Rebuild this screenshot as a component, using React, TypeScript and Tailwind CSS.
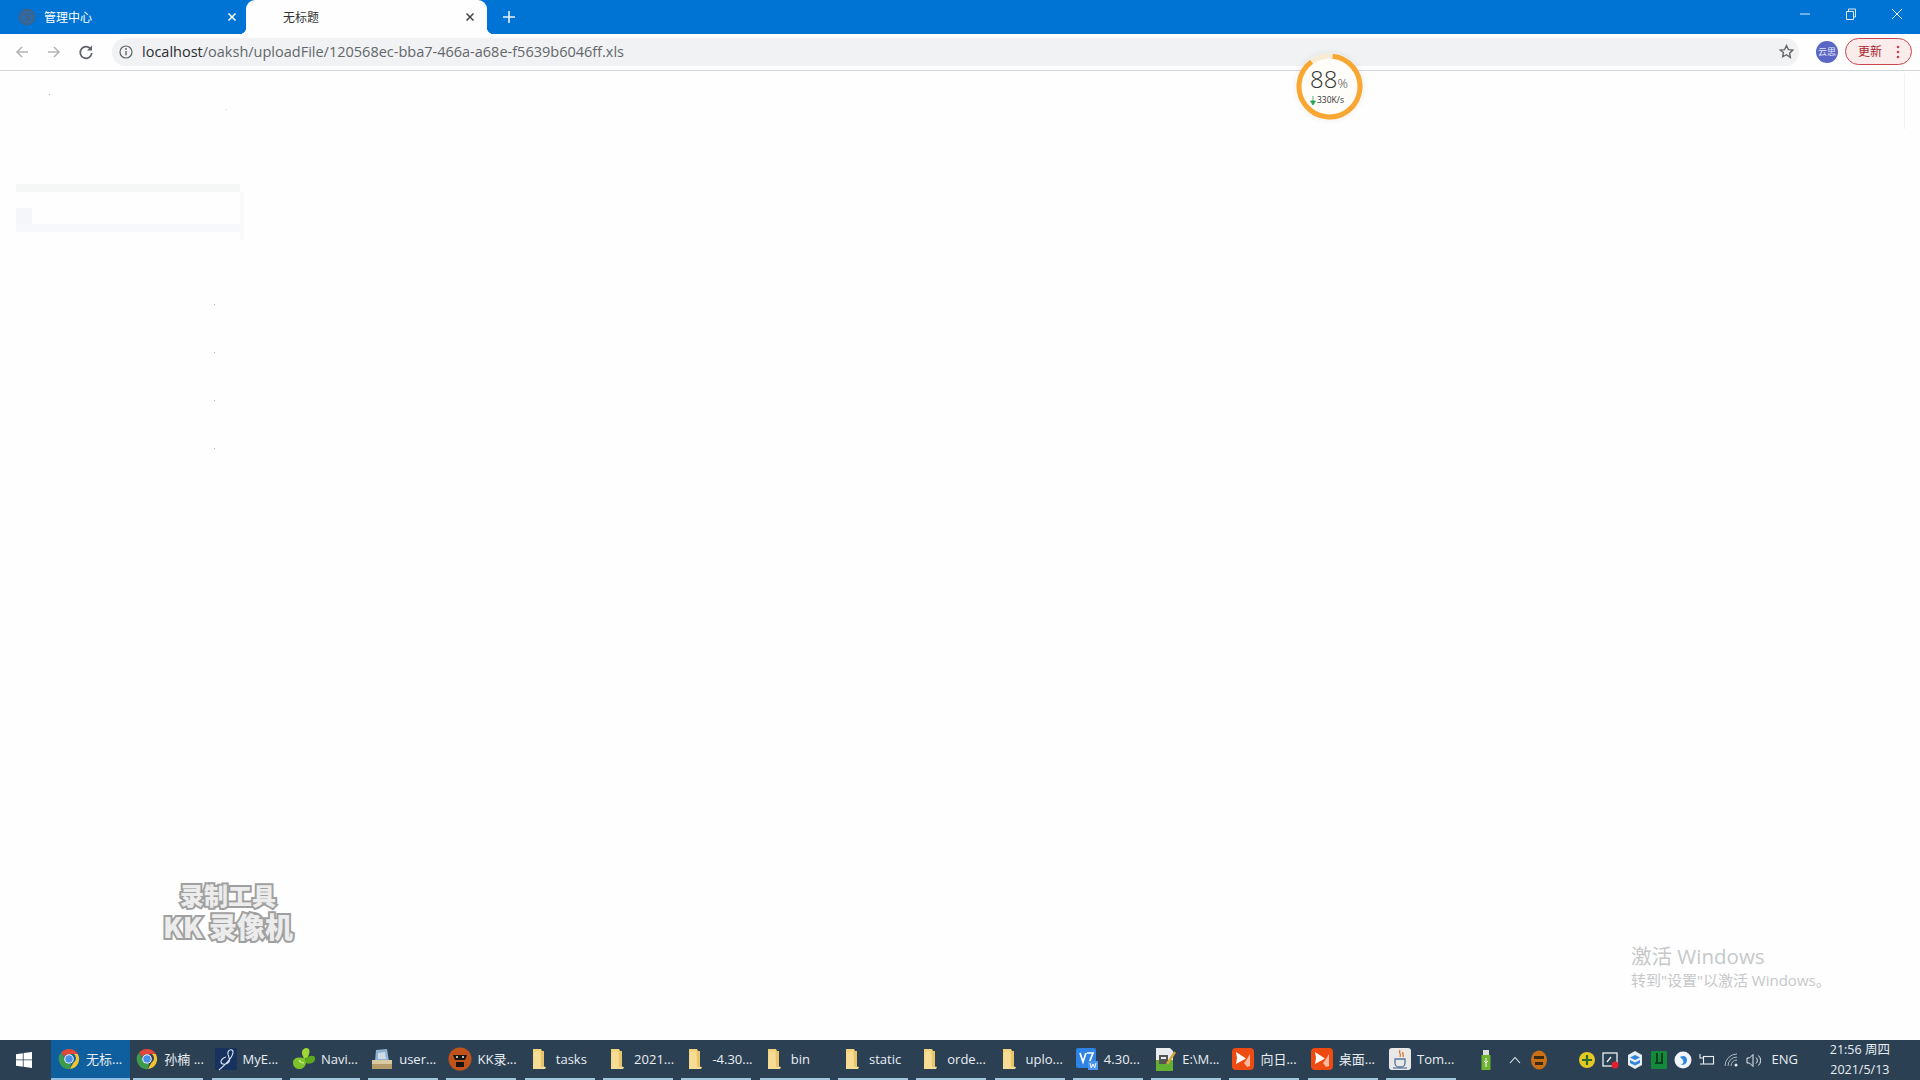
import React from "react";

const sans = "[font-family:'Open_Sans','Noto_Sans_CJK_SC',sans-serif]";

function Chrome() {
  return (
    <svg width="22" height="22" viewBox="0 0 24 24">
      <path d="M12 1a11 11 0 0 1 9.6 5.5H12a5.5 5.5 0 0 0-5.2 3.7L3.4 5A11 11 0 0 1 12 1z" fill="#e0483a" />
      <path d="M21.6 6.5A11 11 0 0 1 12.8 23l4-7a5.5 5.5 0 0 0 .1-9.5z" fill="#f4c430" />
      <path d="M12.8 23A11 11 0 0 1 3.4 5l4.3 7.6a5.5 5.5 0 0 0 6.7 4.7z" fill="#3c9a4c" />
      <circle cx="12" cy="12" r="5.2" fill="#fff" />
      <circle cx="12" cy="12" r="4.1" fill="#4a8fe8" />
    </svg>
  );
}

function Folder() {
  return (
    <svg width="18" height="22" viewBox="0 0 18 22">
      <path d="M3 1h8l1 2v16l-9 2z" fill="#f3d27a" />
      <path d="M3 21l1-17 6-1 1 15 5 1-1 2z" fill="#f6dc95" />
      <rect x="11" y="3" width="3" height="16" fill="#e9c468" />
    </svg>
  );
}

function MyE() {
  return (
    <svg width="24" height="24" viewBox="0 0 24 24">
      <rect x="1" y="1" width="22" height="22" fill="#18325f" />
      <path d="M5 23c7-6 14-14 14-18 0-3-4-3-5 0-1 4 3 6 1 10-2 3-8 3-8 0 0-2 2-4 5-5" fill="none" stroke="#dbe6f5" strokeWidth="1.1" />
    </svg>
  );
}

function Navi() {
  return (
    <svg width="24" height="24" viewBox="0 0 24 24">
      <path d="M13 11C7 10 1 10 1 16c0 6 8 8 11 4 3-3 2-6 1-9z" fill="#7cc22a" />
      <path d="M12 11C9 7 9 2 14 1c5 0 4 6 1 10z" fill="#9ed836" />
      <path d="M13 12c4-4 10-4 10-1 1 4-5 7-9 5z" fill="#5da81e" />
      <path d="M7 13c1 2 3 3 5 3" stroke="#d4f08a" strokeWidth="1.2" fill="none" />
    </svg>
  );
}

function User() {
  return (
    <svg width="24" height="24" viewBox="0 0 24 24">
      <path d="M6 3l11-1 2 12H5z" fill="#8fb2d0" />
      <path d="M8 6l7-1 1 7H8z" fill="#cfdbe6" />
      <rect x="2" y="13" width="20" height="4" fill="#d9c9a0" />
      <rect x="2" y="17" width="20" height="5" fill="#b59b6a" />
    </svg>
  );
}

function KK() {
  return (
    <svg width="24" height="24" viewBox="0 0 24 24">
      <circle cx="12" cy="12" r="11.500" fill="#c2531a" />
      <path d="M5 8h14l-2 5H7z" fill="#1b1512" />
      <rect x="8" y="15" width="8" height="5" fill="#1b1512" />
      <circle cx="9" cy="10" r="1" fill="#eee" />
      <circle cx="15" cy="10" r="1" fill="#eee" />
    </svg>
  );
}

function Vs() {
  return (
    <svg width="24" height="24" viewBox="0 0 24 24">
      <rect x="1" y="1" width="20" height="20" rx="2" fill="#2f82e6" />
      <path d="M5 6l3 9 3-9M12 6h6l-4 10" fill="none" stroke="#fff" strokeWidth="1.7" />
      <rect x="13" y="14" width="10" height="9" fill="#4a93ee" />
      <path d="M15 16l1.3 5 1.7-4 1.7 4 1.3-5" fill="none" stroke="#fff" strokeWidth="1" />
    </svg>
  );
}

function Note() {
  return (
    <svg width="24" height="24" viewBox="0 0 24 24">
      <path d="M3 1h14l3 3v20H3z" fill="#e8ecef" />
      <rect x="3" y="13" width="17" height="11" fill="#63b132" />
      <rect x="6" y="8" width="9" height="9" fill="#555" />
      <rect x="8" y="10" width="5" height="2" fill="#eee" />
      <path d="M14 17L22 5" stroke="#d7a63a" strokeWidth="2.4" />
    </svg>
  );
}

function Sun() {
  return (
    <svg width="24" height="24" viewBox="0 0 24 24">
      <rect x="1" y="1" width="22" height="22" rx="4" fill="#ee4b12" />
      <path d="M5 5l10 6.500L5 17l1-6z" fill="#fff" />
      <path d="M16 12l3-5v12l-3 1-3-4z" fill="#ffb89b" />
    </svg>
  );
}

function Tomcat() {
  return (
    <svg width="24" height="24" viewBox="0 0 24 24">
      <rect x="1" y="1" width="22" height="22" rx="3" fill="#e8e8e6" />
      <path d="M12 3c-2 3 2 4 0 7M15 5c-1 2 1 3 0 5" stroke="#d9742a" strokeWidth="1.3" fill="none" />
      <path d="M7 12h10v4a4 4 0 0 1-4 4h-2a4 4 0 0 1-4-4z" fill="none" stroke="#54759a" strokeWidth="1.3" />
      <path d="M5 21h14" stroke="#54759a" strokeWidth="1.2" />
    </svg>
  );
}

const apps: { icon: React.ReactNode; label: string; active?: boolean }[] = [
  { icon: <Chrome />, label: "无标...", active: true },
  { icon: <Chrome />, label: "孙楠 ..." },
  { icon: <MyE />, label: "MyE..." },
  { icon: <Navi />, label: "Navi..." },
  { icon: <User />, label: "user..." },
  { icon: <KK />, label: "KK录..." },
  { icon: <Folder />, label: "tasks" },
  { icon: <Folder />, label: "2021..." },
  { icon: <Folder />, label: "-4.30..." },
  { icon: <Folder />, label: "bin" },
  { icon: <Folder />, label: "static" },
  { icon: <Folder />, label: "orde..." },
  { icon: <Folder />, label: "uplo..." },
  { icon: <Vs />, label: "4.30..." },
  { icon: <Note />, label: "E:\\M..." },
  { icon: <Sun />, label: "向日..." },
  { icon: <Sun />, label: "桌面..." },
  { icon: <Tomcat />, label: "Tom..." },
];

function AppItem({ icon, label, active }: { icon: React.ReactNode; label: string; active?: boolean }) {
  return (
    <div
      className={
        active
          ? "ml-[-4px] mr-[3.3px] flex h-full w-[79px] shrink-0 items-center border-b-2 border-[#8fc0e4] bg-[#0f5f9e] pl-[6px]"
          : "mr-[8.3px] flex h-full w-[70px] shrink-0 items-center border-b-2 border-[#a3c8de] pl-[2px]"
      }
    >
      <span className="flex w-[24px] shrink-0 justify-center">{icon}</span>
      <span className="ml-[5px] whitespace-nowrap pt-[2px] text-[13px] text-[#e8eef2]">{label}</span>
    </div>
  );
}

function Tray({ children, className = "" }: { children: React.ReactNode; className?: string }) {
  return <div className={`flex h-full w-[24px] shrink-0 items-center justify-center ${className}`}>{children}</div>;
}

function Ghost() {
  return (
    <div className="flex flex-col pl-[16px] pt-[113px]">
      <div className="h-[8px] w-[224px] bg-[#f5f7f6]" />
      <div className="flex">
        <div className="flex w-[224px] flex-col">
          <div className="h-[16px]" />
          <div className="h-[16px] w-[16px] bg-[#f4f6fa]" />
          <div className="h-[8px] w-full bg-[#f7f8fb]" />
        </div>
        <div className="h-[48px] w-[4px] bg-[#f8f9f9]" />
      </div>
      <div className="mt-[64px] flex flex-col items-start gap-[47px] pl-[198px]">
        <div className="h-px w-px bg-[#b5b5b5]" />
        <div className="h-px w-px bg-[#b5b5b5]" />
        <div className="h-px w-px bg-[#b5b5b5]" />
        <div className="h-px w-px bg-[#b5b5b5]" />
      </div>
    </div>
  );
}

export default function App() {
  return (
    <div className={`flex h-[1080px] w-[1920px] flex-col overflow-hidden bg-[#fdfefd] ${sans}`}>
      {/* title bar */}
      <div className="flex h-[34px] shrink-0 items-stretch bg-[#0074d4]">
        <div className="flex w-[246px] items-center pl-[18px] pr-[8px] text-white">
          <svg width="18" height="18" viewBox="0 0 18 18">
            <circle cx="9" cy="9" r="7.5" fill="#2d6aa8" stroke="#4a5f78" strokeWidth="1.5" />
            <path d="M11.500 6c-2-1.500-5-.5-4 1.200s4 1.200 4 3-3 2-4.500.8" fill="none" stroke="#4a5f78" strokeWidth="1.200" />
          </svg>
          <span className="ml-[8px] pt-[1px] text-[12px]">管理中心</span>
          <svg className="ml-auto" width="12" height="12" viewBox="0 0 12 12">
            <path d="M2.500 2.500l7 7M9.500 2.500l-7 7" stroke="#fff" strokeWidth="1.500" />
          </svg>
        </div>
        <div className="relative flex w-[241px] items-center rounded-t-[9px] bg-[#fdfefd] pl-[37px] pr-[11px] text-[#333]">
          <div className="absolute bottom-0 left-[-7px] h-[7px] w-[7px] bg-[radial-gradient(circle_at_0_0,transparent_7px,#fdfefd_7.500px)]" />
          <div className="absolute bottom-0 right-[-7px] h-[7px] w-[7px] bg-[radial-gradient(circle_at_100%_0,transparent_7px,#fdfefd_7.500px)]" />
          <span className="pt-[1px] text-[12px]">无标题</span>
          <svg className="ml-auto" width="12" height="12" viewBox="0 0 12 12">
            <path d="M2.500 2.500l7 7M9.500 2.500l-7 7" stroke="#444" strokeWidth="1.500" />
          </svg>
        </div>
        <div className="flex w-[44px] items-center justify-center">
          <svg width="14" height="14" viewBox="0 0 14 14">
            <path d="M7 1v12M1 7h12" stroke="#e6f2fc" strokeWidth="1.600" />
          </svg>
        </div>
        <div className="ml-auto flex items-start">
          <div className="flex h-[28px] w-[46px] items-center justify-center">
            <svg width="12" height="12" viewBox="0 0 12 12"><path d="M1 6h10" stroke="#dcebf8" strokeWidth="1" /></svg>
          </div>
          <div className="flex h-[28px] w-[46px] items-center justify-center">
            <svg width="12" height="12" viewBox="0 0 12 12">
              <path d="M1.500 3.500h7v8h-7zM3.500 3.500v-2.500h7v8h-2" fill="none" stroke="#dcebf8" strokeWidth="1" />
            </svg>
          </div>
          <div className="flex h-[28px] w-[46px] items-center justify-center">
            <svg width="12" height="12" viewBox="0 0 12 12"><path d="M1 1l10 10M11 1L1 11" stroke="#e8f2fb" strokeWidth="1" /></svg>
          </div>
        </div>
      </div>

      {/* toolbar */}
      <div className="flex h-[37px] shrink-0 items-center border-b border-[#d3d6da] bg-[#fdfefd] pb-[1px]">
        <div className="flex w-[112px] shrink-0 items-center pl-[15px]">
          <svg width="14" height="14" viewBox="0 0 14 14">
            <path d="M13 7H2M7 2L2 7l5 5" fill="none" stroke="#b3b5b8" strokeWidth="1.600" />
          </svg>
          <svg className="ml-[18px]" width="14" height="14" viewBox="0 0 14 14">
            <path d="M1 7h11M7 2l5 5-5 5" fill="none" stroke="#b3b5b8" strokeWidth="1.600" />
          </svg>
          <svg className="ml-[17px]" width="16" height="16" viewBox="0 0 16 16">
            <path d="M13 5.500A5.800 5.800 0 1 0 13.800 9" fill="none" stroke="#60636a" strokeWidth="1.700" />
            <path d="M14 1.500v5h-5z" fill="#60636a" />
          </svg>
        </div>
        <div className="flex h-[28px] w-[1687px] shrink-0 items-center rounded-full bg-[#f1f2f3] pl-[7px] pr-[5px]">
          <svg width="14" height="14" viewBox="0 0 14 14">
            <circle cx="7" cy="7" r="6" fill="none" stroke="#5f6368" strokeWidth="1.200" />
            <path d="M7 6v4.200" stroke="#5f6368" strokeWidth="1.400" />
            <circle cx="7" cy="4" r=".9" fill="#5f6368" />
          </svg>
          <span className="ml-[9px] whitespace-nowrap text-[14.500px] text-[#63676c]">
            <span className="text-[#2c2e31]">localhost</span>/oaksh/uploadFile/120568ec-bba7-466a-a68e-f5639b6046ff.xls
          </span>
          <svg className="ml-auto" width="15" height="15" viewBox="0 0 24 24">
            <path d="M12 2.500l3 6.400 7 .9-5.100 4.800 1.300 6.900L12 17.200l-6.200 3.300 1.300-6.900L2 9.800l7-.9z" fill="none" stroke="#666" strokeWidth="2.200" />
          </svg>
        </div>
        <div className="ml-[17px] flex h-[22px] w-[22px] shrink-0 items-center justify-center rounded-full bg-[#5a67c4] text-[9px] text-[#e6e8f7]">云思</div>
        <div className="ml-[7px] flex h-[27px] w-[67px] shrink-0 items-center rounded-full border border-[#c8454d] bg-[#fbecec] pl-[12px] text-[12px] text-[#a8242c]">
          更新
          <svg className="ml-[14px]" width="4" height="14" viewBox="0 0 4 14">
            <circle cx="2" cy="2" r="1.300" fill="#c9434d" />
            <circle cx="2" cy="7" r="1.300" fill="#c9434d" />
            <circle cx="2" cy="12" r="1.300" fill="#c9434d" />
          </svg>
        </div>
      </div>

      {/* page */}
      <div className="relative min-h-0 flex-1">
        <Ghost />
        <div className="absolute left-[49px] top-[23px] h-px w-px bg-[#b5b5b5]" />
        <div className="absolute left-[226px] top-[38px] h-px w-px bg-[#d0d0d0]" />
        <div className="absolute right-[15px] top-[2px] h-[56px] w-px bg-[#f2f4f4]" />

        {/* speed ball */}
        <div className="absolute left-[1296px] top-[-18px] h-[67px] w-[67px] rounded-full shadow-[0_0_6px_rgba(0,0,0,0.08)]">
          <svg className="absolute inset-0" width="67" height="67" viewBox="0 0 67 67">
            <circle cx="33.500" cy="33.500" r="30.500" fill="#fffdf9" stroke="#f8ebd3" strokeWidth="5" />
            <circle
              cx="33.500"
              cy="33.500"
              r="30.500"
              fill="none"
              stroke="#f8a732"
              strokeWidth="5"
              strokeDasharray="169 192"
              transform="rotate(-84 33.500 33.500)"
            />
          </svg>
          <div className="absolute left-[14px] top-[11px] flex items-baseline font-light text-[#333]">
            <span className="text-[24px] leading-[30px]">88</span>
            <span className="text-[13px] leading-none text-[#444]">%</span>
          </div>
          <div className="absolute left-[14px] top-[41px] flex items-center whitespace-nowrap text-[8.500px] leading-[12px] text-[#333]">
            <svg width="6" height="9" viewBox="0 0 6 9"><path d="M3 0v6M.500 5L3 9l2.500-4z" fill="#23a455" stroke="#23a455" strokeWidth=".8" /></svg>
            <span className="ml-[1px]">330K/s</span>
          </div>
        </div>

        {/* recorder watermark */}
        <div className="absolute left-[160px] top-[808px] flex w-[136px] flex-col items-center font-black text-[#ececec] [font-family:'Noto_Sans_CJK_SC',sans-serif] [-webkit-text-stroke:4px_#a0a0a0] [paint-order:stroke_fill]">
          <span className="text-[24px] leading-[32px]">录制工具</span>
          <span className="whitespace-nowrap text-[28px] leading-[31px]">KK 录像机</span>
        </div>

        {/* activation watermark */}
        <div className="absolute left-[1631px] top-[872px] flex flex-col whitespace-nowrap text-[#c6c8ca]">
          <span className="text-[20.500px] leading-[27px]">激活 Windows</span>
          <span className="text-[15px] leading-[20px]">转到"设置"以激活 Windows。</span>
        </div>
      </div>

      {/* taskbar */}
      <div className="flex h-[40px] shrink-0 items-stretch bg-[#2c4054]">
        <div className="flex w-[55px] shrink-0 items-center pl-[16px]">
          <svg width="16" height="16" viewBox="0 0 16 16">
            <path d="M0 2.200L6.800 1.200V7.500H0zM7.600 1.100L16 0v7.500H7.600zM0 8.300h6.800v6.400L0 13.800zM7.600 8.300H16V16l-8.400-1.200z" fill="#fff" />
          </svg>
        </div>
        {apps.map((a, i) => (
          <AppItem key={i} icon={a.icon} label={a.label} active={a.active} />
        ))}
        <div className="flex items-stretch text-[#e8eef2]">
          <Tray className="ml-[9.500px]">
            <svg width="10" height="20" viewBox="0 0 10 20">
              <rect x="2" y="0" width="6" height="5" fill="#ddd" />
              <rect x="0.500" y="5" width="9" height="15" fill="#6eb52f" />
              <path d="M5 8v9M3 11l2 2 2-2" stroke="#fff" strokeWidth="1" fill="none" />
            </svg>
          </Tray>
          <Tray className="ml-[5px]">
            <svg width="12" height="8" viewBox="0 0 12 8"><path d="M1 7l5-5.500L11 7" fill="none" stroke="#e8eef2" strokeWidth="1.100" /></svg>
          </Tray>
          <Tray>
            <svg width="18" height="20" viewBox="0 0 18 20">
              <ellipse cx="9" cy="10" rx="8" ry="9.500" fill="#c96f14" />
              <rect x="4" y="6" width="10" height="3" fill="#3a2a14" />
              <rect x="5" y="12" width="8" height="3" fill="#3a2a14" />
            </svg>
          </Tray>
          <Tray className="ml-[24px]">
            <svg width="18" height="18" viewBox="0 0 18 18">
              <circle cx="9" cy="9" r="8" fill="#e4c824" />
              <path d="M9 4v10M4 9h10" stroke="#2d6b2a" strokeWidth="2.200" />
            </svg>
          </Tray>
          <Tray className="ml-[0px]">
            <svg width="18" height="18" viewBox="0 0 18 18">
              <rect x="1" y="2" width="14" height="13" fill="none" stroke="#e8eef2" strokeWidth="1.300" />
              <path d="M5 11l4-5" stroke="#e8eef2" strokeWidth="1.300" />
              <circle cx="13" cy="14" r="3.500" fill="#e0202c" />
            </svg>
          </Tray>
          <Tray>
            <svg width="16" height="20" viewBox="0 0 16 20">
              <path d="M8 1l7 4v10l-7 4-7-4V5z" fill="#e8eef2" />
              <path d="M8 5l5 2.500L8 10 3 7.500z" fill="#2f86d8" />
              <path d="M3 10l5 2.500 5-2.500v3l-5 2.500L3 13z" fill="#2f86d8" />
            </svg>
          </Tray>
          <Tray>
            <svg width="18" height="20" viewBox="0 0 18 20">
              <rect x="1" y="1" width="16" height="18" rx="1" fill="#128a3a" />
              <rect x="6" y="3" width="2" height="9" fill="#0a3f1d" />
              <rect x="11" y="3" width="2" height="9" fill="#0a3f1d" />
              <rect x="5" y="12" width="8" height="2" fill="#0a3f1d" />
            </svg>
          </Tray>
          <Tray>
            <svg width="18" height="20" viewBox="0 0 18 20">
              <circle cx="9" cy="10" r="8.500" fill="#f1f4f8" />
              <path d="M6 7c3-2 7-1 7 3s-3 5-6 5c2-1 3-3 2-5-1-1-2-2-3-3z" fill="#2f86e0" />
            </svg>
          </Tray>
          <Tray>
            <svg width="16" height="14" viewBox="0 0 16 14">
              <rect x="4.500" y="3.500" width="10" height="7.500" fill="none" stroke="#e8eef2" strokeWidth="1.100" />
              <path d="M1 1v4h3M1 11h3" stroke="#e8eef2" strokeWidth="1.100" fill="none" />
            </svg>
          </Tray>
          <Tray className="ml-[1px]">
            <svg width="16" height="14" viewBox="0 0 16 14">
              <path d="M1 13A12 12 0 0 1 13 1M4 13a9 9 0 0 1 9-9M7 13a6 6 0 0 1 6-6" fill="none" stroke="#aeb9c3" strokeWidth="1" />
              <circle cx="12" cy="12" r="1.500" fill="#e8eef2" />
            </svg>
          </Tray>
          <Tray className="ml-[-1px]">
            <svg width="17" height="15" viewBox="0 0 17 15">
              <path d="M1 5h2.500L7 1.500v12L3.500 10H1z" fill="none" stroke="#e8eef2" strokeWidth="1" />
              <path d="M10 4.500a4 4 0 0 1 0 6M12.500 2.500a7 7 0 0 1 0 10" fill="none" stroke="#e8eef2" strokeWidth="1" />
            </svg>
          </Tray>
          <div className="flex w-[36px] shrink-0 items-center justify-center text-[13px]">ENG</div>
          <div className="ml-[22px] flex w-[70px] shrink-0 flex-col items-center justify-center text-[12.500px] leading-[20px]">
            <span className="whitespace-nowrap">21:56 周四</span>
            <span className="whitespace-nowrap">2021/5/13</span>
          </div>
        </div>
      </div>
    </div>
  );
}
